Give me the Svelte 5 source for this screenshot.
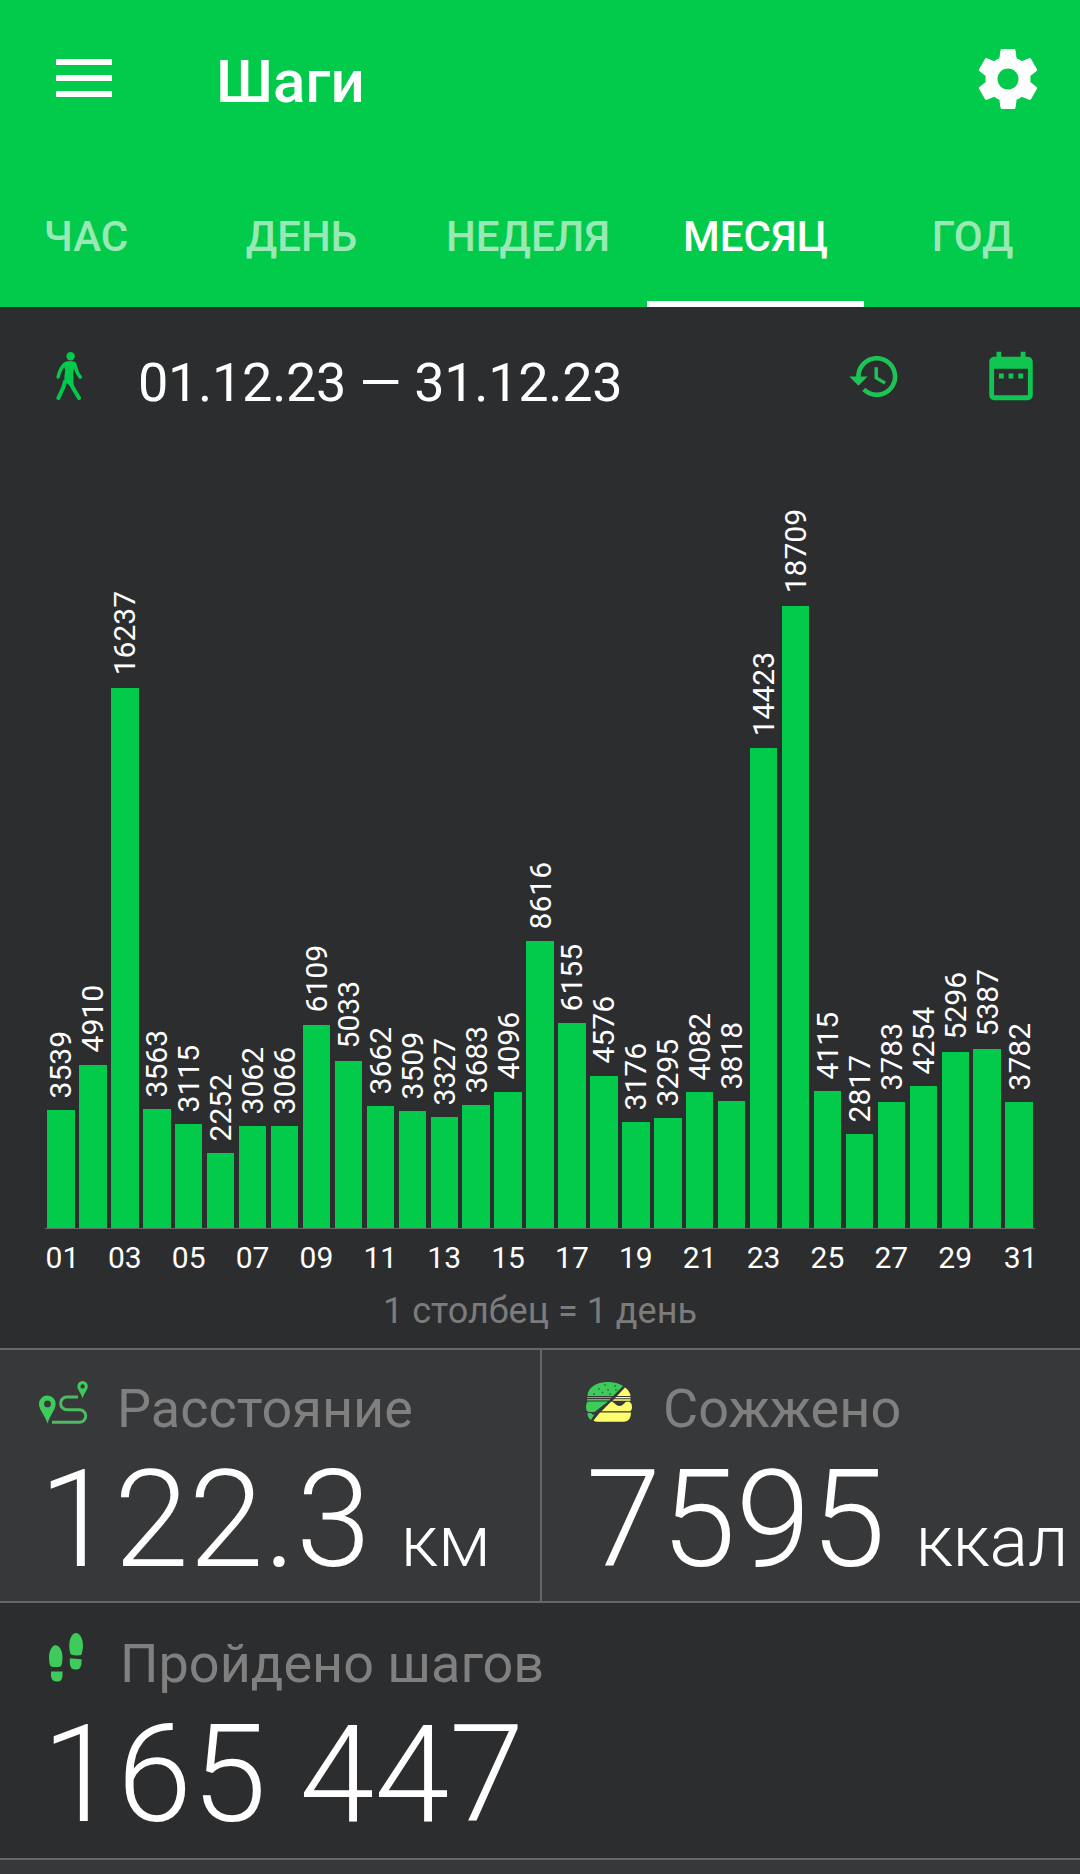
<script>
  const tabs = ["ЧАС", "ДЕНЬ", "НЕДЕЛЯ", "МЕСЯЦ", "ГОД"];
  let active = "МЕСЯЦ";

  const steps = [
    3539, 4910, 16237, 3563, 3115, 2252, 3062, 3066, 6109, 5033, 3662, 3509,
    3327, 3683, 4096, 8616, 6155, 4576, 3176, 3295, 4082, 3818, 14423, 18709,
    4115, 2817, 3783, 4254, 5296, 5387, 3782,
  ];

  // height of the tallest bar, px
  const maxHeight = 622.5;
  const max = Math.max(...steps);
  const barHeight = (n) => (n / max) * maxHeight;
</script>

<div class="app">
  <header>
    <div class="bar">
      <svg class="menu" viewBox="0 0 56 38">
        <path d="M0 0h56v6H0zM0 16h56v6H0zM0 32h56v6H0z" fill="#fff" />
      </svg>
      <h1>Шаги</h1>
      <svg class="gear" viewBox="0 0 24 24">
        <path
          fill="#fff"
          d="M19.43 12.98c.04-.32.07-.64.07-.98s-.03-.66-.07-.98l2.11-1.65c.19-.15.24-.42.12-.64l-2-3.46c-.12-.22-.39-.3-.61-.22l-2.49 1c-.52-.4-1.08-.73-1.69-.98l-.38-2.65C14.46 2.18 14.25 2 14 2h-4c-.25 0-.46.18-.49.42l-.38 2.65c-.61.25-1.17.59-1.69.98l-2.49-1c-.23-.09-.49 0-.61.22l-2 3.46c-.13.22-.07.49.12.64l2.11 1.65c-.04.32-.07.65-.07.98s.03.66.07.98l-2.11 1.65c-.19.15-.24.42-.12.64l2 3.46c.12.22.39.3.61.22l2.49-1c.52.4 1.08.73 1.69.98l.38 2.65c.03.24.24.42.49.42h4c.25 0 .46-.18.49-.42l.38-2.65c.61-.25 1.17-.59 1.69-.98l2.49 1c.23.09.49 0 .61-.22l2-3.46c.12-.22.07-.49-.12-.64l-2.11-1.65zM12 15.5c-1.93 0-3.5-1.57-3.5-3.5s1.57-3.5 3.5-3.5 3.5 1.57 3.5 3.5-1.57 3.5-3.5 3.5z"
        />
      </svg>
    </div>
    <nav>
      {#each tabs as tab}
        <button class:active={tab === active} on:click={() => (active = tab)}>{tab}</button>
      {/each}
    </nav>
  </header>

  <div class="period">
    <svg class="walk" viewBox="0 0 26 48">
      <circle cx="14.6" cy="4.3" r="4.2" fill="#03ca4c" />
      <g fill="none" stroke="#03ca4c" stroke-linecap="round" stroke-linejoin="round">
        <path d="M9 11.8Q4 16 2.2 25M18.5 11.8l3 9.5L24.2 25" stroke-width="3.6" />
        <path d="M9 29.5L7.5 35 2.4 46M12 28l4.5 7 6.5 11" stroke-width="4" />
      </g>
      <path
        fill="#03ca4c"
        d="M10 9.5Q14 8.3 18 9.5L20 12.5 17.6 18Q17 23 17.4 28L17.8 36 9.6 30.5Q8.2 28.5 8.4 25L9.2 18 7.2 12.5z"
      />
    </svg>
    <span class="dates">01.12.23 — 31.12.23</span>
    <svg class="history" viewBox="0 0 24 24">
      <path
        fill="#1cc455"
        d="M13 3c-4.97 0-9 4.03-9 9H1l3.89 3.89.07.14L9 12H6c0-3.87 3.13-7 7-7s7 3.13 7 7-3.13 7-7 7c-1.93 0-3.68-.79-4.94-2.06l-1.42 1.42C8.27 19.99 10.51 21 13 21c4.97 0 9-4.03 9-9s-4.03-9-9-9zm-1 5v5l4.28 2.54.72-1.21-3.5-2.08V8H12z"
      />
    </svg>
    <svg class="calendar" viewBox="0 0 24 24">
      <path
        fill="#0fc750"
        d="M9 11H7v2h2v-2zm4 0h-2v2h2v-2zm4 0h-2v2h2v-2zm2-7h-1V2h-2v2H8V2H6v2H5c-1.11 0-1.99.9-1.99 2L3 20c0 1.1.89 2 2 2h14c1.1 0 2-.9 2-2V6c0-1.1-.9-2-2-2zm0 16H5V9h14v11z"
      />
    </svg>
  </div>

  <div class="chart">
    {#each steps as n}
      <div class="col">
        <span>{n}</span>
        <div class="fill" style="height: {barHeight(n)}px"></div>
      </div>
    {/each}
  </div>
  <div class="axis">
    {#each steps as _, i}
      <span>{i % 2 === 0 ? String(i + 1).padStart(2, "0") : ""}</span>
    {/each}
  </div>
  <p class="caption">1 столбец = 1 день</p>

  <div class="stats">
    <section class="distance">
      <h2>
        <svg viewBox="0 0 49 43">
          <g fill="#3fcb59" fill-rule="evenodd">
            <path d="M8.5 14.5A8.3 8.3 0 0 0 0 23c0 6 6 11 8.5 19.5C11 34 16.6 29 16.6 23a8.3 8.3 0 0 0-8.1-8.5zm0 5a3.4 3.4 0 1 1 0 6.8 3.4 3.4 0 0 1 0-6.8z" />
            <path d="M43.6 0a5.2 5.2 0 0 0-5.2 5.3c0 4 3.8 6.5 5.2 12.2 1.4-5.7 5.2-8.2 5.2-12.2A5.2 5.2 0 0 0 43.6 0zm0 3.2a2.2 2.2 0 1 1 0 4.4 2.2 2.2 0 0 1 0-4.4z" />
          </g>
          <path d="M39 16H28a6.2 6.2 0 0 0 0 12.8H40.5a6.2 6.2 0 0 1 0 12.5H13" fill="none" stroke="#4fba63" stroke-width="3" />
        </svg>
        Расстояние
      </h2>
      <div class="value">122.3<small>км</small></div>
    </section>
    <section class="burned">
      <h2>
        <svg viewBox="0 0 46 40">
          <g fill="#3fcb59">
            <path d="M1.5 14C1.5 6 10 0 22 0c6 0 11 1.3 15 4L27 14zM1 15h25l-1 1H1zM1 17h23.500l-1.500 1.500H1zM2 19.500h20L8.500 30H2.500Q0 29 0 25.500q0-5 2-6z" />
            <path d="M1.500 31h3.500l1.500 1.500h1.800L5 38Q1.500 36 1.500 31z" />
          </g>
          <g fill="#ffff6e">
            <path d="M39 5.500Q44 9 44.500 14H31zM30 15h14.500v1.200H29zM28 17.200h16.500v1.500H26.500z" />
            <path d="M15.500 29.300L25 19.800h1.500l4 3.200q3 2 6 0l3.500-3.200h3.500q2.500 1.500 2.500 5.200 0 4-2.500 4.300zM14 30.600h31q0 9-7 9.200H12q-3.500 0-4.500-1.200z" />
          </g>
          <g fill="#207a38">
            <circle cx="19" cy="3" r=".9" /><circle cx="13" cy="7" r=".9" />
            <circle cx="22" cy="8" r=".9" /><circle cx="29" cy="4" r=".9" />
            <circle cx="8" cy="12" r=".9" /><circle cx="16.5" cy="10.5" r=".9" />
            <circle cx="24" cy="12" r=".9" /><circle cx="30" cy="8" r=".9" />
          </g>
        </svg>
        Сожжено
      </h2>
      <div class="value">7595<small>ккал</small></div>
    </section>
    <section class="total">
      <h2>
        <svg viewBox="0 0 34 49">
          <path
            fill="#3fcb59"
            d="M6.5 12.200c4 0 7 5.500 7 12 0 4-.5 7-1.500 9-3.500 1.200-7 1.200-10.500 0C.5 31 0 28 0 24.500c0-6.500 3-12.300 6.500-12.300zM2 38.500h11.500V43q-.5 5.500-4.500 5.500H7Q2.500 48 2 43zM27 0c4 0 7 6 7 12.500 0 3-.5 6-1.700 9.500-3.500.8-7 .6-10.500-.5-1.200-3-1.500-5-1.500-9C20.300 6 23 0 27 0zM20.800 25.200l11.700 1V31q-1 5.500-5 5.500h-2q-4-.5-4.700-5.500z"
          />
        </svg>
        Пройдено шагов
      </h2>
      <div class="value">165 447</div>
    </section>
    <section class="next"></section>
  </div>
</div>

<style>
  :global(body) {
    background: #2c2d2f;
  }

  .app {
    width: 1080px;
    height: 1874px;
    overflow: hidden;
    background: #2c2d2f;
    color: #fff;
    font-family: Roboto, "Liberation Sans", sans-serif;
  }

  header {
    height: 307px;
    background: #02ca4b;
  }

  .bar {
    box-sizing: border-box;
    height: 158px;
    padding: 0 36px 0 56px;
    display: flex;
    align-items: center;
  }

  .menu {
    width: 56px;
    height: 38px;
    margin-bottom: 2px;
  }

  h1 {
    flex: 1;
    margin: 0 0 0 104px;
    padding-top: 5px;
    font-size: 60px;
    font-weight: 500;
  }

  .gear {
    width: 72px;
    height: 72px;
  }

  nav {
    display: grid;
    grid-template-columns: 218px 215px 238px 217px 217px;
    height: 149px;
    margin-left: -24px;
  }

  button {
    padding: 14px 0 0;
    border: 0;
    border-bottom: 6px solid transparent;
    background: none;
    color: rgba(255, 255, 255, 0.6);
    font: 500 42px Roboto, "Liberation Sans", sans-serif;
  }

  button:first-child {
    padding-left: 2px;
  }

  button.active {
    border-bottom-color: #fff;
    color: #fff;
  }

  .period {
    box-sizing: border-box;
    display: flex;
    align-items: center;
    height: 138px;
    padding: 0 40px 0 56px;
  }

  .walk {
    width: 26px;
    height: 48px;
  }

  .dates {
    flex: 1;
    margin-left: 56px;
    padding-top: 13px;
    font-size: 54px;
    letter-spacing: -0.3px;
  }

  .history {
    width: 55px;
    height: 55px;
    margin-right: 80px;
  }

  .calendar {
    width: 58px;
    height: 58px;
  }

  .chart {
    display: flex;
    height: 783px;
    margin: 0 45px;
    border-bottom: 1px solid #66696a;
  }

  .col {
    flex: 1;
    min-width: 0;
    padding: 0 2.25px;
    display: flex;
    flex-direction: column;
    justify-content: flex-end;
    align-items: center;
  }

  .col span {
    margin-bottom: 12px;
    padding-right: 1px;
    writing-mode: vertical-rl;
    transform: rotate(180deg);
    font-size: 30px;
    line-height: 34px;
  }

  .fill {
    width: 100%;
    background: #02ca4b;
  }

  .axis {
    display: flex;
    height: 57px;
    margin: 0 45px;
    font-size: 30px;
    line-height: 57px;
  }

  .axis span {
    flex: 1;
    min-width: 0;
    display: flex;
    justify-content: center;
  }

  .axis span:first-child,
  .axis span:last-child {
    text-indent: 3px;
  }

  .caption {
    height: 62px;
    margin: 0;
    color: #7c7c7c;
    font-size: 36px;
    line-height: 50px;
    text-align: center;
  }

  .stats {
    display: grid;
    grid-template-columns: 540px 540px;
    grid-template-rows: 253px 257px 16px;
  }

  section {
    box-sizing: border-box;
    border-top: 2px solid #666768;
    background: #373839;
    padding: 27px 0 0 39px;
    white-space: nowrap;
  }

  .burned {
    border-left: 2px solid #666768;
    padding-left: 44px;
  }

  .total {
    grid-column: 1 / 3;
    padding: 29px 0 0 49px;
    background: #2c2d2f;
  }

  .next {
    grid-column: 1 / 3;
  }

  h2 {
    display: flex;
    margin: 0;
    color: #808080;
    font-size: 54px;
    font-weight: 400;
    line-height: 64px;
  }

  h2 svg {
    width: 49px;
    height: 43px;
    margin: 4px 29px 0 0;
  }

  .burned svg {
    width: 46px;
    height: 40px;
    margin: 5px 31px 0 0;
  }

  .total svg {
    width: 34px;
    height: 49px;
    margin: 1px 37px 0 0;
  }

  .value {
    font-size: 135px;
    font-weight: 300;
    line-height: 159px;
  }

  .total .value {
    margin-left: -7px;
  }

  small {
    margin-left: 30px;
    font-size: 72px;
    letter-spacing: -0.3px;
  }
</style>
